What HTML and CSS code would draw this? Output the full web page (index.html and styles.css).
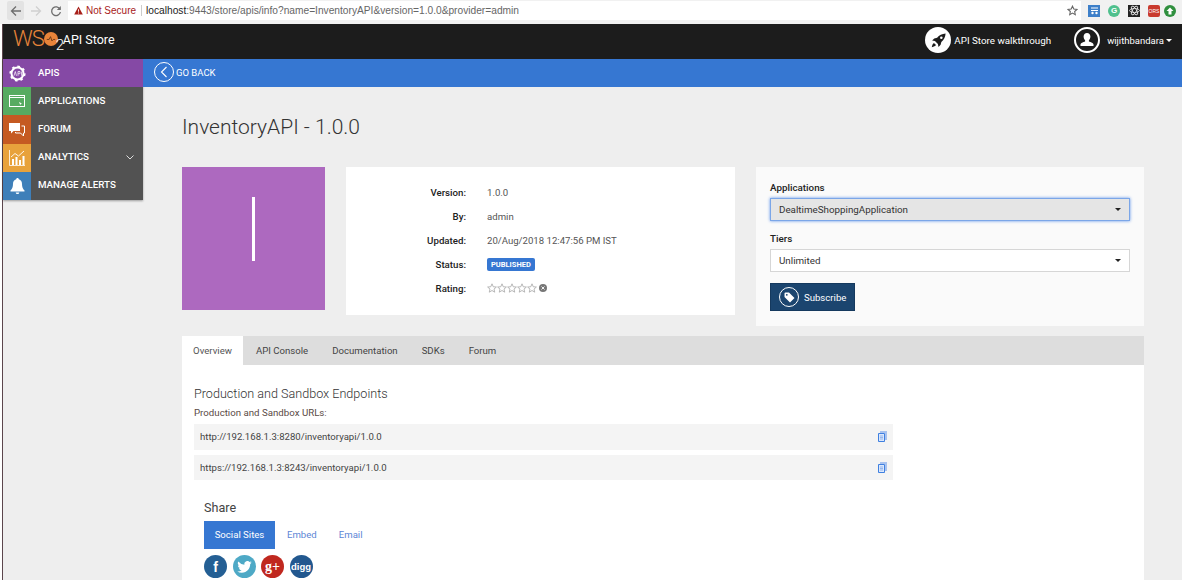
FILE: index.html
```html
<!DOCTYPE html>
<html lang="en">

<head>
    <meta charset="UTF-8">
    <meta name="viewport" content="width=device-width, initial-scale=1.0">
    <title>InventoryAPI - API Store</title>
    <link rel="stylesheet" href="styles.css">
</head>

<body>
    <div class="frame">
        <!-- browser toolbar -->
        <div class="browser-bar">
            <div class="nav-btn nav-back">
                <svg width="12" height="12" viewBox="0 0 12 12"><path d="M11 6H2M6 1.5 1.5 6 6 10.5" fill="none" stroke="#6e6e6e" stroke-width="1.3"/></svg>
            </div>
            <div class="nav-btn">
                <svg width="12" height="12" viewBox="0 0 12 12"><path d="M1 6h9M6 1.5 10.5 6 6 10.5" fill="none" stroke="#d0d0d0" stroke-width="1.3"/></svg>
            </div>
            <div class="nav-btn">
                <svg width="12" height="12" viewBox="0 0 12 12"><path d="M10 4.2A4.4 4.4 0 1 0 10.4 7" fill="none" stroke="#6e6e6e" stroke-width="1.3"/><path d="M10.8 1v4h-4z" fill="#6e6e6e"/></svg>
            </div>
            <div class="omnibox">
                <svg class="warn-icon" width="9" height="9" viewBox="0 0 10 10"><path d="M5 .5 9.8 9.500H.2z" fill="#a8201a"/><path d="M4.500 3.500h1v3h-1zM4.500 7.200h1v1h-1z" fill="#fff"/></svg>
                <span class="not-secure">Not Secure</span>
                <span class="url"><b>localhost</b>:9443/store/apis/info?name=InventoryAPI&amp;version=1.0.0&amp;provider=admin</span>
                <svg class="star-icon" width="11" height="11" viewBox="0 0 24 24"><path d="M12 2.500l2.900 6.300 6.900.8-5.100 4.700 1.400 6.800-6.100-3.400-6.100 3.400 1.400-6.800L2.200 9.600l6.900-.8z" fill="none" stroke="#666" stroke-width="2.400"/></svg>
            </div>
            <div class="extensions">
                <span class="ext ext-blue"><svg width="11" height="11" viewBox="0 0 11 11"><path d="M2 3h7M2 5.500h7" stroke="#fff" stroke-width="1"/><circle cx="3.500" cy="8" r="1.200" fill="#fff"/><circle cx="7.500" cy="8" r="1.200" fill="#fff"/></svg></span>
                <span class="ext ext-gram">G</span>
                <span class="ext ext-dark"><svg width="11" height="11" viewBox="0 0 11 11"><g fill="none" stroke="#eee" stroke-width=".8"><ellipse cx="5.500" cy="5.500" rx="5" ry="2"/><ellipse cx="5.500" cy="5.500" rx="5" ry="2" transform="rotate(60 5.500 5.500)"/><ellipse cx="5.500" cy="5.500" rx="5" ry="2" transform="rotate(120 5.500 5.500)"/></g></svg></span>
                <span class="ext ext-red">ORS</span>
                <span class="ext ext-green"><svg width="8" height="8" viewBox="0 0 8 8"><path d="M4 .5 7.500 4H5.500v3.500h-3V4H.5z" fill="#fff"/></svg></span>
            </div>
        </div>

        <div class="page">
            <!-- top header -->
            <header class="top-header">
                <div class="logo">
                    <span class="logo-ws">WS</span>
                    <svg class="logo-o" width="14" height="14" viewBox="0 0 15 15"><circle cx="7.500" cy="7.500" r="7.500" fill="#e8843a"/><path d="M3 8h2.500l1.500-3 1.500 4.500L10 8h2" fill="none" stroke="#5b3216" stroke-width=".9"/></svg>
                    <span class="logo-two">2</span>
                    <span class="logo-name">API Store</span>
                </div>
                <div class="header-right">
                    <span class="round-icon round-solid">
                        <svg width="17" height="17" viewBox="0 0 24 24"><path d="M22 2c-5 .3-9 2.300-12 6L6 9l-3 3 4 .8L11.200 17l.8 4 3-3 1-4c3.700-3 5.700-7 6-12z" fill="#1c1c1c"/><path d="M5.500 15.500C4 16.500 3 18.500 2.500 21.500c3-.5 5-1.500 6-3z" fill="#1c1c1c"/><circle cx="16" cy="8" r="1.800" fill="#fff"/></svg>
                    </span>
                    <span class="walkthrough">API Store walkthrough</span>
                    <span class="round-icon round-outline">
                        <svg width="16" height="16" viewBox="0 0 16 16"><path d="M8 1c2.100 0 3.400 1.600 3.400 3.600 0 1.500-.7 3-1.500 3.700v1.100c1.700.7 4.600 1.300 4.600 3.100v1.500h-13v-1.500c0-1.800 2.900-2.400 4.600-3.100V8.300C5.300 7.600 4.600 6.100 4.600 4.600 4.600 2.600 5.900 1 8 1z" fill="#fff"/></svg>
                    </span>
                    <span class="username">wijithbandara</span>
                    <span class="caret caret-white"></span>
                </div>
            </header>

            <div class="shell">
                <!-- left menu -->
                <nav class="side-menu">
                    <a class="menu-item menu-active">
                        <span class="menu-icon">
                            <svg width="17" height="17" viewBox="0 0 17 17"><circle cx="8.500" cy="8.500" r="6" fill="none" stroke="#fff" stroke-width="2"/><circle cx="8.500" cy="8.500" r="7.200" fill="none" stroke="#fff" stroke-width="1.800" stroke-dasharray="2.600 3"/><path d="M5 10.800 6.300 6.500l1.200 4.300M9 10.800V6.500h2v2.200H9M12.500 6.500v4.300" fill="none" stroke="#fff" stroke-width=".7"/></svg>
                        </span>
                        <span class="menu-label">APIS</span>
                    </a>
                    <a class="menu-item">
                        <span class="menu-icon icon-green">
                            <svg width="16" height="14" viewBox="0 0 16 14"><path d="M0 1h16v12H0z" fill="#fff"/><path d="M1 4h14v8H1z" fill="#57ab61"/><path d="M1 2h14v1H1z" fill="#57ab61"/><path d="M10 8l3 1.500-1.300.4-.4 1.300z" fill="#fff"/></svg>
                        </span>
                        <span class="menu-label">APPLICATIONS</span>
                    </a>
                    <a class="menu-item">
                        <span class="menu-icon icon-orange">
                            <svg width="16" height="15" viewBox="0 0 16 15"><path d="M0 1h11v8H4.500L2 11.500V9H0z" fill="#fff"/><path d="M12.500 4h3v7h-1v3l-3-3H6.500V10" fill="none" stroke="#fff" stroke-width="1"/></svg>
                        </span>
                        <span class="menu-label">FORUM</span>
                    </a>
                    <a class="menu-item">
                        <span class="menu-icon icon-amber">
                            <svg width="16" height="16" viewBox="0 0 16 16"><path d="M.5 0v15.500H16" fill="none" stroke="#fff" stroke-width=".8"/><path d="M3 9h2v6H3zM6.500 7h2v8h-2zM10 10h2v5h-2zM13.500 6h2v9h-2z" fill="#fff"/><path d="M2 7l4-3.500L9.500 6 15 1" fill="none" stroke="#fff" stroke-width=".9"/></svg>
                        </span>
                        <span class="menu-label">ANALYTICS</span>
                        <svg class="menu-chevron" width="8" height="5" viewBox="0 0 8 5"><path d="M.5.500 4 4 7.500.5" fill="none" stroke="#ddd" stroke-width="1"/></svg>
                    </a>
                    <a class="menu-item">
                        <span class="menu-icon icon-blue">
                            <svg width="15" height="16" viewBox="0 0 15 16"><path d="M7.500 0c.8 0 1.300.6 1.300 1.300 2.200.6 3.200 2.400 3.200 4.700 0 3 .8 5 2.500 6.500v1H.5v-1C2.200 11 3 9 3 6c0-2.300 1-4.100 3.200-4.700C6.200.6 6.700 0 7.500 0z" fill="#fff"/><path d="M5.700 14.500h3.600a1.800 1.500 0 0 1-3.600 0z" fill="#fff"/></svg>
                        </span>
                        <span class="menu-label">MANAGE ALERTS</span>
                    </a>
                </nav>

                <main class="main">
                    <div class="back-bar">
                        <span class="back-circle">
                            <svg width="8" height="12" viewBox="0 0 8 12"><path d="M6.500 1 1.500 6l5 5" fill="none" stroke="#fff" stroke-width="1.100"/></svg>
                        </span>
                        <span>GO BACK</span>
                    </div>

                    <div class="content">
                        <h1 class="api-title">InventoryAPI - 1.0.0</h1>

                        <div class="summary">
                            <div class="api-thumb"><span class="thumb-letter"></span></div>

                            <div class="info-panel">
                                <div class="info-row"><span class="info-label">Version:</span><span>1.0.0</span></div>
                                <div class="info-row"><span class="info-label">By:</span><span>admin</span></div>
                                <div class="info-row"><span class="info-label">Updated:</span><span>20/Aug/2018 12:47:56 PM IST</span></div>
                                <div class="info-row"><span class="info-label">Status:</span><span class="status-badge">PUBLISHED</span></div>
                                <div class="info-row">
                                    <span class="info-label">Rating:</span>
                                    <span class="stars">
                                        <svg width="10" height="10" viewBox="0 0 24 24"><path id="star" d="M12 2l3 7 7.500.7-5.700 4.900 1.800 7.400-6.600-4-6.600 4 1.800-7.400L1.500 9.700 9 9z" fill="none" stroke="#aaa" stroke-width="2"/></svg>
                                        <svg width="10" height="10" viewBox="0 0 24 24"><use href="#star"/></svg>
                                        <svg width="10" height="10" viewBox="0 0 24 24"><use href="#star"/></svg>
                                        <svg width="10" height="10" viewBox="0 0 24 24"><use href="#star"/></svg>
                                        <svg width="10" height="10" viewBox="0 0 24 24"><use href="#star"/></svg>
                                        <svg class="rating-clear" width="8" height="8" viewBox="0 0 8 8"><circle cx="4" cy="4" r="4" fill="#777"/><path d="M2.500 2.500l3 3m0-3-3 3" stroke="#fff" stroke-width=".9"/></svg>
                                    </span>
                                </div>
                            </div>

                            <div class="subscribe-panel">
                                <label class="field-label">Applications</label>
                                <div class="select select-focus">DealtimeShoppingApplication<span class="caret"></span></div>
                                <label class="field-label">Tiers</label>
                                <div class="select">Unlimited<span class="caret"></span></div>
                                <button class="subscribe-btn">
                                    <span class="subscribe-circle">
                                        <svg width="11" height="11" viewBox="0 0 11 11"><path d="M.5 1.500a1 1 0 0 1 1-1H5l5.500 5.500-4.500 4.500L.5 5z" fill="#fff"/><circle cx="2.800" cy="2.800" r=".9" fill="#1b456f"/></svg>
                                    </span>
                                    Subscribe
                                </button>
                            </div>
                        </div>

                        <div class="details">
                            <div class="tabs">
                                <span class="tab tab-active">Overview</span>
                                <span class="tab">API Console</span>
                                <span class="tab">Documentation</span>
                                <span class="tab">SDKs</span>
                                <span class="tab">Forum</span>
                            </div>
                            <div class="tab-body">
                                <h4 class="endpoints-title">Production and Sandbox Endpoints</h4>
                                <p class="endpoints-sub">Production and Sandbox URLs:</p>
                                <div class="url-row">
                                    http://192.168.1.3:8280/inventoryapi/1.0.0
                                    <svg width="9" height="11" viewBox="0 0 9 11"><path d="M2 0h7v9H7V2H2z" fill="#a9c3ef"/><path d="M.5 2.500h6v8h-6z" fill="#dbe7fb" stroke="#3f80e0"/><path d="M2 5h3M2 6.500h3M2 8h3" stroke="#7ba3e6" stroke-width=".7"/></svg>
                                </div>
                                <div class="url-row">
                                    https://192.168.1.3:8243/inventoryapi/1.0.0
                                    <svg width="9" height="11" viewBox="0 0 9 11"><path d="M2 0h7v9H7V2H2z" fill="#a9c3ef"/><path d="M.5 2.500h6v8h-6z" fill="#dbe7fb" stroke="#3f80e0"/><path d="M2 5h3M2 6.500h3M2 8h3" stroke="#7ba3e6" stroke-width=".7"/></svg>
                                </div>

                                <div class="share">
                                    <h4 class="share-title">Share</h4>
                                    <div class="share-tabs">
                                        <span class="share-tab share-active">Social Sites</span>
                                        <span class="share-tab">Embed</span>
                                        <span class="share-tab">Email</span>
                                    </div>
                                    <div class="social-list">
                                        <span class="social social-fb">f</span>
                                        <span class="social social-tw">
                                            <svg width="15" height="12" viewBox="0 0 24 20"><path d="M24 2.400c-.9.400-1.800.7-2.800.8 1-.6 1.800-1.600 2.200-2.700-1 .6-2 1-3.100 1.200A4.900 4.900 0 0 0 11.900 6.200 13.900 13.900 0 0 1 1.700.9a4.900 4.900 0 0 0 1.500 6.600c-.8 0-1.600-.2-2.200-.6 0 2.400 1.700 4.400 3.900 4.900-.7.200-1.500.2-2.200.1.600 2 2.400 3.400 4.600 3.400A9.900 9.900 0 0 1 0 17.300 13.900 13.900 0 0 0 7.500 19.500c9.100 0 14.300-7.700 14-14.600 1-.7 1.800-1.600 2.500-2.500z" fill="#fff"/></svg>
                                        </span>
                                        <span class="social social-gp">g+</span>
                                        <span class="social social-digg">digg</span>
                                    </div>
                                </div>
                            </div>
                        </div>
                    </div>
                </main>
            </div>
        </div>
    </div>
</body>

</html>
```

FILE: styles.css
```css
html, body {
    margin: 0;
    height: 586px;
    overflow: hidden;
    background-color: #fff;
    font-family: Roboto, Arial, sans-serif;
}

.frame {
    width: 1182px;
    height: 580px;
    overflow: hidden;
}

/* browser toolbar */
.browser-bar {
    height: 24px;
    padding: 1px 0 0 7px;
    background-color: #f1f1f1;
    display: flex;
    align-items: flex-start;
    box-sizing: border-box;
    font-family: "Liberation Sans", Arial, sans-serif;
}

.nav-btn {
    width: 17px;
    height: 19px;
    margin-right: 3px;
    display: flex;
    align-items: center;
    justify-content: center;
}

.nav-back {
    background-color: #e3e3e3;
    border-radius: 2px;
}

.omnibox {
    width: 1013px;
    height: 19px;
    margin-left: 1px;
    padding: 0 3px 0 6px;
    background-color: #fff;
    box-sizing: border-box;
    display: flex;
    align-items: center;
    font-size: 10.2px;
}

.not-secure {
    margin-left: 3px;
    padding-right: 5px;
    margin-right: 4px;
    color: #a8201a;
    font-size: 10px;
    border-right: 1px solid #ccc;
}

.url {
    color: #666;
    flex: 1;
}

.url b {
    font-weight: normal;
    color: #222;
}

.extensions {
    display: flex;
    align-items: center;
    height: 19px;
    margin-left: 7px;
    gap: 8px;
}

.ext {
    width: 12px;
    height: 12px;
    display: flex;
    align-items: center;
    justify-content: center;
    font-size: 5px;
    color: #fff;
}

.ext-blue { background-color: #3d7fc9; }
.ext-gram { background-color: #4fc08d; border-radius: 50%; font-size: 8px; font-weight: bold; }
.ext-dark { background-color: #222; }
.ext-red { background-color: #c93a2e; border-radius: 2px; }
.ext-green { background-color: #2f8f3e; border-radius: 50%; margin-left: -4px; }

/* page */
.page {
    margin-left: 2px;
    border-left: 1px solid #5b454c;
    background-color: #eee;
    height: 556px;
}

.top-header {
    height: 35px;
    background-color: #1c1c1c;
    display: flex;
    align-items: center;
    justify-content: space-between;
    padding: 0 10px 3px 10px;
    box-sizing: border-box;
}

.logo {
    display: flex;
    align-items: center;
    color: #fff;
    margin-bottom: 2px;
}

.logo-ws {
    color: #e8843a;
    font-size: 22px;
    line-height: 22px;
    font-weight: 300;
    letter-spacing: -1px;
}

.logo-two {
    font-size: 15px;
    line-height: 15px;
    font-weight: 300;
    margin: 12px 0 0 -2px;
    width: 7px;
}

.logo-name {
    font-size: 12.5px;
}

.header-right {
    display: flex;
    align-items: center;
    color: #fff;
    font-size: 9.8px;
}

.round-icon {
    width: 26px;
    height: 26px;
    border-radius: 50%;
    box-sizing: border-box;
    display: flex;
    align-items: center;
    justify-content: center;
}

.round-solid {
    background-color: #fff;
}

.round-outline {
    border: 2px solid #fff;
}

.walkthrough {
    margin: 0 23px 0 3px;
}

.username {
    margin: 0 2px 0 7px;
    font-size: 9.5px;
}

.caret {
    width: 0;
    height: 0;
    border-left: 3px solid transparent;
    border-right: 3px solid transparent;
    border-top: 3px solid #222;
}

.caret-white {
    border-top-color: #fff;
}

.shell {
    display: flex;
    align-items: flex-start;
}

/* left menu */
.side-menu {
    width: 140px;
    flex-shrink: 0;
    background-color: #525252;
    box-shadow: 0 1px 2px rgba(0, 0, 0, 0.35);
}

.menu-item {
    height: 28.2px;
    display: flex;
    align-items: center;
    color: #fff;
    font-size: 9.75px;
    font-weight: 500;
}

.menu-active {
    background-color: #8549a5;
}

.menu-icon {
    width: 28px;
    height: 100%;
    display: flex;
    align-items: center;
    justify-content: center;
    flex-shrink: 0;
}

.icon-green { background-color: #57ab61; }
.icon-orange { background-color: #c55a22; }
.icon-amber { background-color: #e8a23c; }
.icon-blue { background-color: #3e7fb9; }

.menu-label {
    margin: 0 0 2px 7px;
    flex: 1;
}

.menu-chevron {
    margin-right: 9px;
}

/* main area */
.main {
    flex: 1;
    min-width: 0;
}

.back-bar {
    height: 28px;
    padding: 0 0 2px 11px;
    background-color: #3677d2;
    color: #fff;
    font-size: 9.5px;
    display: flex;
    align-items: center;
    gap: 2px;
    box-sizing: border-box;
}

.back-circle {
    width: 20px;
    height: 20px;
    border: 1px solid #fff;
    border-radius: 50%;
    box-sizing: border-box;
    display: flex;
    align-items: center;
    justify-content: center;
}

.content {
    padding: 0 38px 0 39px;
}

.api-title {
    margin: 0;
    padding-top: 27px;
    height: 53px;
    font-size: 21px;
    line-height: 26px;
    font-weight: 300;
    color: #333;
}

.summary {
    display: flex;
    align-items: flex-start;
}

.api-thumb {
    width: 143px;
    height: 143px;
    flex-shrink: 0;
    background-color: #ad69bf;
    display: flex;
    align-items: center;
    justify-content: center;
}

.thumb-letter {
    width: 3px;
    height: 64px;
    margin-bottom: 20px;
    background-color: #fff;
}

.info-panel {
    width: 389px;
    height: 148px;
    margin-left: 21px;
    padding-top: 13px;
    background-color: #fff;
    box-sizing: border-box;
    font-size: 9.6px;
    color: #555;
}

.info-row {
    height: 24px;
    display: flex;
    align-items: center;
}

.info-label {
    width: 120px;
    margin-right: 21px;
    text-align: right;
    font-size: 9.7px;
    font-weight: 500;
    color: #222;
}

.status-badge {
    padding: 0 4px;
    height: 13px;
    line-height: 13px;
    background-color: #3677d2;
    border-radius: 2px;
    color: #fff;
    font-size: 7.5px;
    font-weight: 700;
}

.stars {
    display: flex;
    align-items: center;
}

.rating-clear {
    margin-left: 2px;
}

.subscribe-panel {
    width: 388px;
    height: 159px;
    margin-left: 21px;
    padding: 14px 14px 0;
    background-color: #fafafa;
    box-sizing: border-box;
}

.field-label {
    display: block;
    height: 17px;
    font-size: 9.8px;
    line-height: 13px;
    font-weight: 500;
    color: #222;
}

.select {
    height: 23px;
    margin-bottom: 11px;
    padding: 0 8px 0 8px;
    background-color: #fff;
    border: 1px solid #d6d6d6;
    box-sizing: border-box;
    display: flex;
    align-items: center;
    justify-content: space-between;
    font-size: 9.8px;
    color: #333;
}

.select-focus {
    background-color: #e5e5e5;
    border-color: #7ba6e8;
    box-shadow: 0 0 3px #5f94ea;
}

.subscribe-btn {
    width: 85px;
    height: 28px;
    margin-top: 2px;
    padding: 0 0 0 8px;
    background-color: #1b456f;
    border: 1px solid #15395e;
    color: #fff;
    font-family: inherit;
    font-size: 9.6px;
    display: flex;
    align-items: center;
    gap: 5px;
}

.subscribe-circle {
    width: 20px;
    height: 20px;
    border: 1.500px solid #fff;
    border-radius: 50%;
    box-sizing: border-box;
    display: flex;
    align-items: center;
    justify-content: center;
}

/* tabs */
.details {
    margin-top: 10px;
}

.tabs {
    height: 29px;
    background-color: #ddd;
    display: flex;
    font-size: 9.6px;
    color: #444;
}

.tab {
    padding: 0 12px;
    line-height: 29px;
}

.tab-active {
    width: 61px;
    padding: 0;
    margin-right: 1px;
    text-align: center;
    background-color: #fff;
    color: #555;
}

.tab-body {
    height: 215px;
    padding: 22px 0 0 12px;
    background-color: #fff;
    box-sizing: border-box;
}

.endpoints-title {
    margin: 0;
    font-size: 12.6px;
    line-height: 14px;
    font-weight: 300;
    color: #333;
}

.endpoints-sub {
    margin: 5px 0 5px;
    font-size: 9.7px;
    line-height: 13px;
    color: #5a4a45;
}

.url-row {
    width: 699px;
    height: 25.500px;
    margin-bottom: 5px;
    padding: 0 6px;
    background-color: #f4f4f4;
    box-sizing: border-box;
    display: flex;
    align-items: center;
    justify-content: space-between;
    font-size: 9.6px;
    color: #444;
}

.share {
    padding: 15px 0 0 10px;
}

.share-title {
    margin: 0;
    font-size: 12.6px;
    line-height: 16px;
    font-weight: 400;
    color: #444;
}

.share-tabs {
    display: flex;
    margin-top: 5px;
    font-size: 9.6px;
    color: #5d86d6;
}

.share-tab {
    height: 28px;
    line-height: 28px;
    margin-right: 22px;
}

.share-active {
    width: 71px;
    margin-right: 12px;
    text-align: center;
    background-color: #3677d2;
    color: #fff;
}

.social-list {
    display: flex;
    gap: 5.5px;
    margin-top: 6px;
}

.social {
    width: 23px;
    height: 23px;
    border-radius: 50%;
    display: flex;
    align-items: center;
    justify-content: center;
    color: #fff;
    font-family: "Liberation Serif", serif;
    font-weight: bold;
    font-size: 14px;
}

.social-fb { background-color: #245f94; font-family: "Liberation Sans", sans-serif; }
.social-tw { background-color: #4ea9c6; }
.social-gp { background-color: #c0281f; }
.social-digg {
    background-color: #22588f;
    font-family: "Liberation Sans", sans-serif;
    font-size: 9.5px;
}
```
